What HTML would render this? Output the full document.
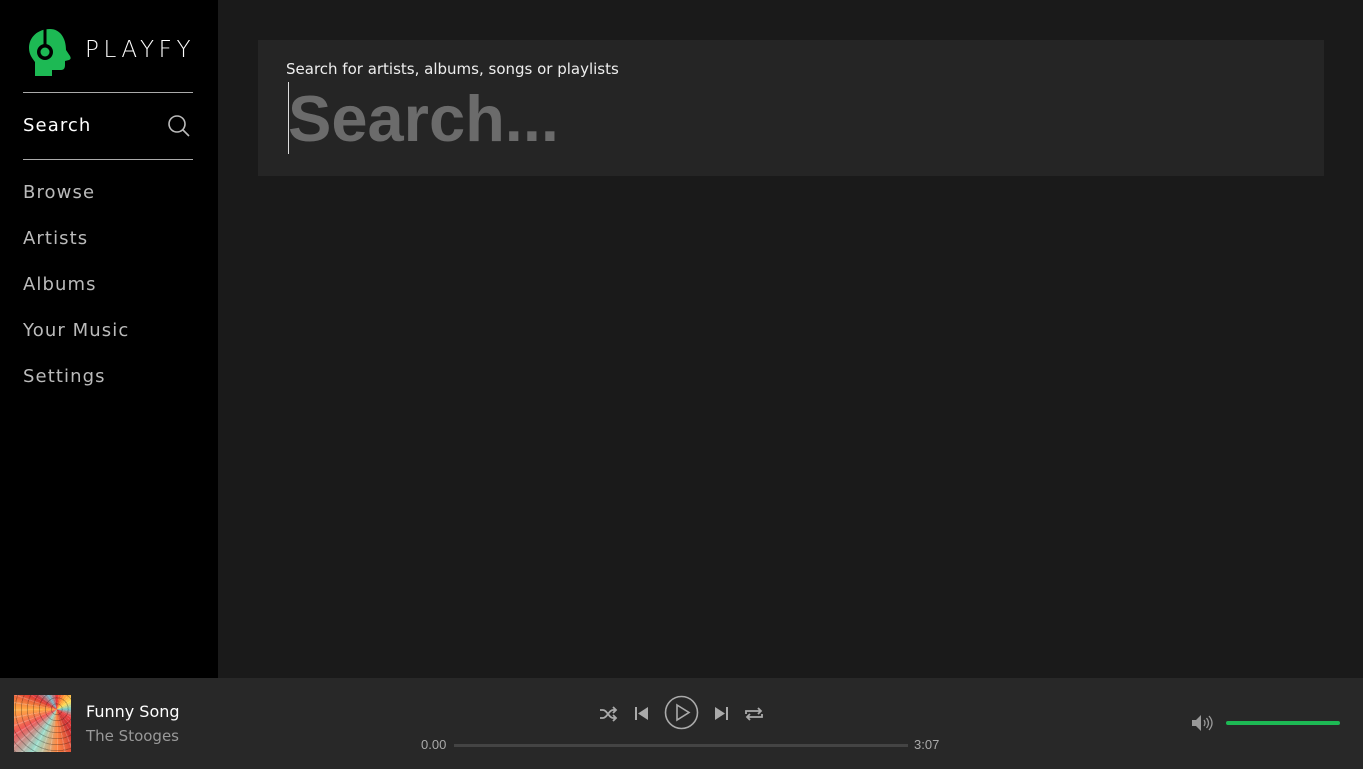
<!DOCTYPE html>
<html><head><meta charset="utf-8"><style>
*{margin:0;padding:0;box-sizing:border-box}
body{width:1363px;height:769px;background:#1a1a1a;font-family:"DejaVu Sans","Liberation Sans",sans-serif;overflow:hidden;position:relative}
.side{position:absolute;left:0;top:0;width:218px;height:678px;background:#000}
.logo{position:absolute;left:28px;top:28px}
.brand{position:absolute;left:85px;top:37px;color:#fff;font-size:23px;letter-spacing:4.6px;font-weight:300}
.hr{position:absolute;left:23px;width:170px;height:1px;background:#aaa}
.nav{position:absolute;left:23px;color:#bbb;font-size:18px;letter-spacing:1.1px}
.box{position:absolute;left:258px;top:40px;width:1066px;height:136px;background:#252525}
.lbl{position:absolute;left:28px;top:20px;color:#eee;font-size:15px;font-family:"DejaVu Sans",sans-serif}
.big{position:absolute;left:30px;top:41px;color:#6b6b6b;font-size:65px;font-weight:bold;font-family:"Liberation Sans",sans-serif}
.caret{position:absolute;left:30px;top:42px;width:1px;height:72px;background:#ddd}
.bar{position:absolute;left:0;top:678px;width:1363px;height:91px;background:#282828}
.art{position:absolute;left:14px;top:17px;width:57px;height:57px;background:conic-gradient(from 0deg at 75% 25%,#e33,#f93,#fd5,#7cc,#e44,#c33,#f84,#9dc,#e55,#fa4,#d33,#7bc,#e33);overflow:hidden}
.art:after{content:"";position:absolute;inset:0;background:repeating-radial-gradient(circle at 75% 25%,transparent 0 5px,rgba(0,0,0,.25) 5px 6px),repeating-conic-gradient(from 0deg at 75% 25%,transparent 0 8deg,rgba(255,255,255,.2) 8deg 10deg)}
.t1{position:absolute;left:86px;top:24px;color:#fff;font-size:16px}
.t2{position:absolute;left:86px;top:49px;color:#999;font-size:15px}
.tm{position:absolute;top:59px;color:#aaa;font-size:13px;font-family:"Liberation Sans",sans-serif}
.prog{position:absolute;left:454px;top:66px;width:454px;height:3px;background:#444}
.vol{position:absolute;left:1226px;top:43px;width:114px;height:4px;border-radius:2px;background:#1db954}
</style></head><body>
<div class="side">
<svg class="logo" width="46" height="50" viewBox="0 0 46 50"><path d="M22 1 C10 1 1 9 1 20 C1 27 5 31 7 34 L7 48 L24 48 L24 42 L33 42 C36 42 37 40 37 37 L37 33 L41 32 C43 31 43 30 42 28 L38 22 C38 10 32 1 22 1Z" fill="#1db954"/><circle cx="17" cy="24" r="8" fill="#000"/><circle cx="17" cy="24" r="4.5" fill="#1db954"/><rect x="15.5" y="0" width="3" height="17" fill="#000"/></svg>
<div class="brand">PLAYFY</div>
<div class="hr" style="top:92px"></div>
<div class="nav" style="top:115px;color:#fff">Search</div>
<svg style="position:absolute;left:167px;top:114px" width="24" height="24" viewBox="0 0 24 24"><circle cx="10" cy="10" r="8" fill="none" stroke="#bbb" stroke-width="1.6"/><path d="M16 16 L22 22" stroke="#bbb" stroke-width="1.6"/></svg>
<div class="hr" style="top:159px"></div>
<div class="nav" style="top:182px">Browse</div>
<div class="nav" style="top:228px">Artists</div>
<div class="nav" style="top:274px">Albums</div>
<div class="nav" style="top:320px">Your Music</div>
<div class="nav" style="top:366px">Settings</div>
</div>
<div class="box"><div class="lbl">Search for artists, albums, songs or playlists</div><div class="big">Search...</div><div class="caret"></div></div>
<div class="bar">
<div class="art"></div>
<div class="t1">Funny Song</div><div class="t2">The Stooges</div>
<svg style="position:absolute;left:598px;top:26px" width="20" height="20" viewBox="0 0 20 20" fill="none" stroke="#aaa" stroke-width="1.8"><path d="M2 6h3c4 0 6 8 10 8h3M2 14h3c4 0 6-8 10-8h3M15 3l3 3-3 3M15 11l3 3-3 3"/></svg>
<svg style="position:absolute;left:634px;top:28px" width="15" height="15" viewBox="0 0 15 15" fill="#aaa"><rect x="1" y="1" width="2" height="13"/><path d="M14 1 L4 7.5 L14 14Z"/></svg>
<svg style="position:absolute;left:664px;top:17px" width="35" height="35" viewBox="0 0 35 35" fill="none" stroke="#aaa" stroke-width="1.6"><circle cx="17.5" cy="17.5" r="16"/><path d="M13 10 L25 17.5 L13 25Z"/></svg>
<svg style="position:absolute;left:714px;top:28px" width="15" height="15" viewBox="0 0 15 15" fill="#aaa"><rect x="12" y="1" width="2" height="13"/><path d="M1 1 L11 7.5 L1 14Z"/></svg>
<svg style="position:absolute;left:744px;top:26px" width="20" height="20" viewBox="0 0 20 20" fill="none" stroke="#aaa" stroke-width="1.8"><path d="M2 10V7h15M14 4l3 3-3 3M18 10v3H3M6 16l-3-3 3-3"/></svg>
<div class="tm" style="left:421px">0.00</div>
<div class="prog"></div>
<div class="tm" style="left:914px">3:07</div>
<svg style="position:absolute;left:1191px;top:35px" width="22" height="20" viewBox="0 0 22 20" fill="#999"><path d="M1 7h4l5-5v16l-5-5H1Z"/><path d="M13 7q2 3 0 6M15.5 5q4 5 0 10M18 3q6 7 0 14" stroke="#999" stroke-width="1.3" fill="none"/></svg>
<div class="vol"></div>
</div>
</body></html>
